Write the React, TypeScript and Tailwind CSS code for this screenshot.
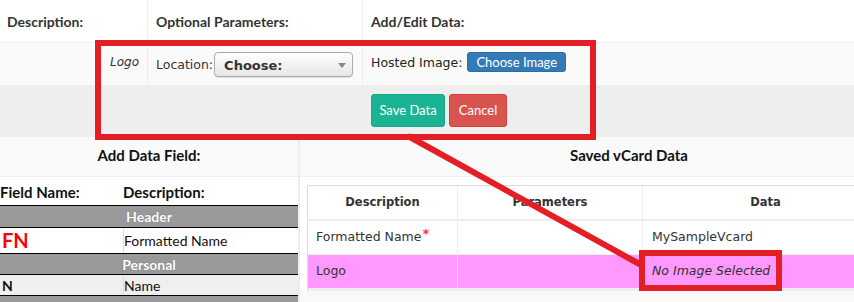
import React from "react";

const lato = "font-['Lato',sans-serif]";
const dv = "font-['DejaVu_Sans',sans-serif]";

export default function App() {
  return (
    <div className={`relative w-[854px] h-[302px] overflow-hidden bg-white ${lato}`}>
      {/* top edit table */}
      <div className="flex h-[43px] border-b border-[#eee] text-[14px] font-bold text-[#333]">
        <div className="w-[148px] border-r border-[#eee] pl-[7px] flex items-center">Description:</div>
        <div className="w-[215px] border-r border-[#eee] pl-[8px] flex items-center">Optional Parameters:</div>
        <div className="flex-1 pl-[8px] flex items-center">Add/Edit Data:</div>
      </div>
      <div className="flex h-[42px] bg-[#fafafa]">
        <div className={`w-[148px] border-r border-[#eee] pr-[8px] pt-[10px] text-right italic text-[12px] text-[#333] ${dv}`}>Logo</div>
        <div className={`w-[215px] border-r border-[#eee] pl-[8px] pt-[9px] flex items-start gap-[1px] ${dv}`}>
          <span className="text-[12.5px] text-[#333] mt-[4px]">Location:</span>
          <div className="relative w-[139px] h-[25px] rounded-[4px] border border-[#aaa] bg-gradient-to-b from-white to-[#e6e6e6] shadow-[0_1px_1px_rgba(0,0,0,0.1)] flex items-center pl-[9px]">
            <span className="text-[13px] font-bold text-[#333] mt-[2px]">Choose:</span>
            <svg className="absolute left-[123px] top-[10px]" width="8" height="5" viewBox="0 0 8 5">
              <polygon points="0,0 8,0 4,5" fill="#888" />
            </svg>
          </div>
        </div>
        <div className={`flex-1 pl-[8px] pt-[9px] flex items-start gap-[5px] ${dv}`}>
          <span className="text-[12.5px] text-[#222] mt-[2px]">Hosted Image:</span>
          <button className={`h-[20px] px-[8px] rounded-[3px] bg-[#337ab7] border border-[#2e6da4] text-white text-[13px] leading-[18px] ${lato}`}>
            Choose Image
          </button>
        </div>
      </div>
      <div className="flex h-[52px] bg-[#eee]">
        <div className="w-[148px]" />
        <div className="w-[215px]" />
        <div className="flex-1 pl-[8px] pt-[9px] flex items-start gap-[4px]">
          <button className="h-[33px] w-[74px] rounded-[3px] bg-[#1ab394] border border-[#18a689] text-white text-[13px]">Save Data</button>
          <button className="h-[33px] w-[58px] rounded-[3px] bg-[#d9534f] border border-[#d43f3a] text-white text-[13px]">Cancel</button>
        </div>
      </div>

      {/* lower panels */}
      <div className="flex">
        <div className="w-[298px] shrink-0">
          <div className="h-[40px] bg-[#fafafa] border-b border-[#eee] flex items-center justify-center pb-[3px] text-[15px] font-bold text-[#111]">
            Add Data Field:
          </div>
          <div className="text-[14px] text-[#111]">
            <div className="flex h-[29px] border-b border-black font-bold text-[15px] items-center pt-[3px]">
              <div className="w-[123px]">Field Name:</div>
              <div>Description:</div>
            </div>
            <div className="h-[22px] border-b border-black bg-[#999] flex items-center justify-center text-white font-bold [text-shadow:0_0_1px_rgba(0,0,0,0.3)]">
              Header
            </div>
            <div className="flex h-[26px] border-b border-black bg-white">
              <div className="w-[123px] pl-[2px] flex items-center text-[20px] font-bold text-[#ff0000] pb-[2px]">FN</div>
              <div className="flex-1 border-l border-[#ddd] flex items-center">Formatted Name</div>
            </div>
            <div className="h-[21px] border-b border-black bg-[#999] flex items-center justify-center text-white font-bold [text-shadow:0_0_1px_rgba(0,0,0,0.3)]">
              Personal
            </div>
            <div className="flex h-[21px] border-b border-black bg-[#efefef]">
              <div className="w-[123px] pl-[2px] flex items-center font-bold">N</div>
              <div className="flex-1 border-l border-[#ddd] flex items-center">Name</div>
            </div>
            <div className="h-[21px] bg-[#999] flex items-start pt-[2px] justify-center text-white font-bold">
              Organizational
            </div>
          </div>
        </div>
        <div className="w-[660px] shrink-0 border-l-2 border-[#eee]">
          <div className="h-[40px] bg-[#fafafa] border-b border-[#eee] flex items-center justify-center pb-[3px] text-[15px] font-bold text-[#111]">
            Saved vCard Data
          </div>
          <div className="pl-[7px] pt-[8px] bg-white">
            <div className={`w-[581px] border-t border-l border-[#ddd] ${dv} text-[12.5px] text-[#333]`}>
              <div className="flex h-[35px] border-b-2 border-[#eee] font-bold text-[11.5px] text-[#333]">
                <div className="w-[149px] flex items-center justify-center">Description</div>
                <div className="w-[185px] border-l border-[#eee] flex items-center justify-center">Parameters</div>
                <div className="flex-1 border-l border-[#eee] flex items-center justify-center">Data</div>
              </div>
              <div className="flex h-[34px] border-b border-[#eee] bg-white">
                <div className="w-[149px] flex items-center pl-[8px]">
                  Formatted Name
                  <span className="text-[#ff3333] text-[13px] font-bold self-start mt-[3px] ml-[1px]">*</span>
                </div>
                <div className="w-[185px] border-l border-[#eee]" />
                <div className="flex-1 border-l border-[#eee] flex items-center pl-[9px]">MySampleVcard</div>
              </div>
              <div className="flex h-[36px] border-b-[3px] border-[#eee] bg-[#ff99ff]">
                <div className="w-[149px] flex items-center pl-[8px]">Logo</div>
                <div className="w-[185px] border-l border-[#f5e0f5]" />
                <div className="flex-1 border-l border-[#f5e0f5] flex items-center pl-[9px] italic">No Image Selected</div>
              </div>
            </div>
          </div>
          <div className="h-[20px] bg-[#f9f9f9]" />
        </div>
      </div>

      {/* annotations */}
      <div className="absolute left-[95px] top-[40px] w-[501px] h-[100px] border-[6px] border-[#e41e25]" />
      <div className="absolute left-[639px] top-[250px] w-[143px] h-[41px] border-[6px] border-[#e41e25]" />
      <svg className="absolute left-0 top-0 pointer-events-none" width="854" height="302">
        <line x1="408" y1="136" x2="643" y2="266" stroke="#e41e25" strokeWidth="6" />
      </svg>
    </div>
  );
}
